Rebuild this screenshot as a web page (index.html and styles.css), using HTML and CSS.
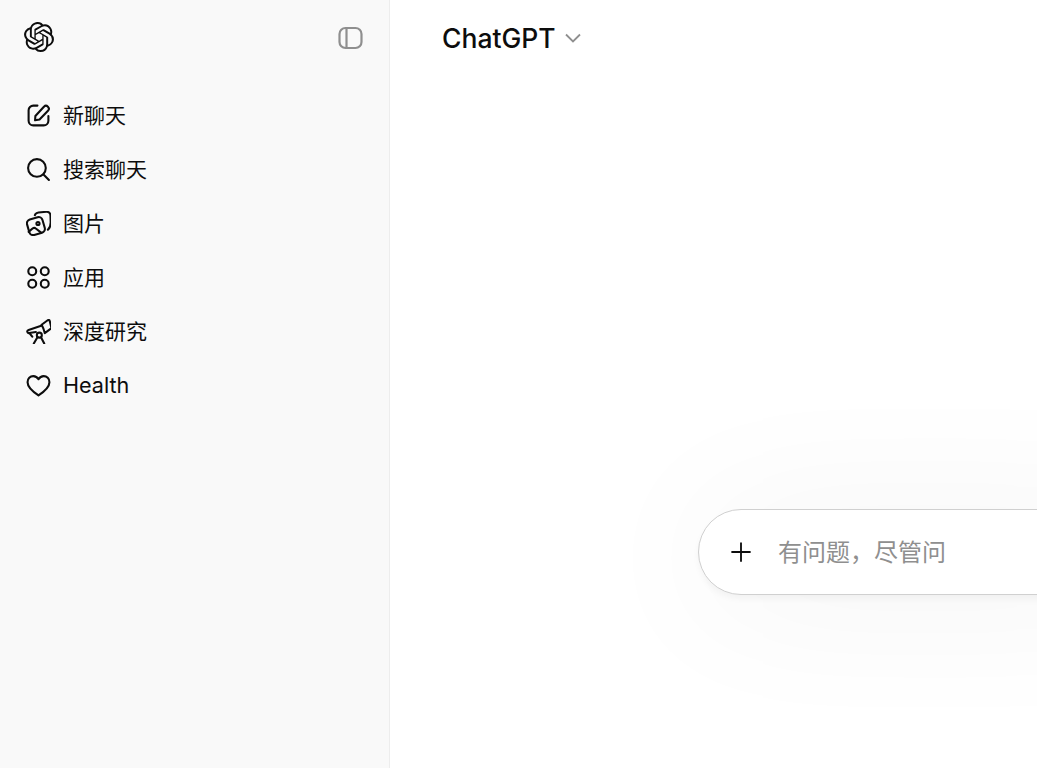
FILE: index.html
```html
<!DOCTYPE html>
<html lang="zh-CN">
<head>
    <meta charset="UTF-8">
    <meta name="viewport" content="width=device-width, initial-scale=1.0">
    <title>ChatGPT</title>
    <link rel="stylesheet" href="styles.css">
</head>
<body>

    <aside class="sidebar">
        <div class="sidebar-top">
            <svg class="logo" viewBox="0 0 24 24" fill="#0d0d0d">
                <path d="M22.2819 9.8211a5.9847 5.9847 0 0 0-.5157-4.9108 6.0462 6.0462 0 0 0-6.5098-2.9A6.0651 6.0651 0 0 0 4.9807 4.1818a5.9847 5.9847 0 0 0-3.9977 2.9 6.0462 6.0462 0 0 0 .7427 7.0966 5.98 5.98 0 0 0 .511 4.9107 6.051 6.051 0 0 0 6.5146 2.9001A5.9847 5.9847 0 0 0 13.2599 24a6.0557 6.0557 0 0 0 5.7718-4.2058 5.9894 5.9894 0 0 0 3.9977-2.9001 6.0557 6.0557 0 0 0-.7475-7.0729zm-9.022 12.6081a4.4755 4.4755 0 0 1-2.8764-1.0408l.1419-.0804 4.7783-2.7582a.7948.7948 0 0 0 .3927-.6813v-6.7369l2.02 1.1686a.071.071 0 0 1 .038.052v5.5826a4.504 4.504 0 0 1-4.4945 4.4944zm-9.6607-4.1254a4.4708 4.4708 0 0 1-.5346-3.0137l.142.0852 4.783 2.7582a.7712.7712 0 0 0 .7806 0l5.8428-3.3685v2.3324a.0804.0804 0 0 1-.0332.0615L9.74 19.9502a4.4992 4.4992 0 0 1-6.1408-1.6464zM2.3408 7.8956a4.485 4.485 0 0 1 2.3655-1.9728V11.6a.7664.7664 0 0 0 .3879.6765l5.8144 3.3543-2.0201 1.1685a.0757.0757 0 0 1-.071 0l-4.8303-2.7865A4.504 4.504 0 0 1 2.3408 7.872zm16.5963 3.8558L13.1038 8.364 15.1192 7.2a.0757.0757 0 0 1 .071 0l4.8303 2.7913a4.4944 4.4944 0 0 1-.6765 8.1042v-5.6772a.79.79 0 0 0-.407-.667zm2.0107-3.0231l-.142-.0852-4.7735-2.7818a.7759.7759 0 0 0-.7854 0L9.409 9.2297V6.8974a.0662.0662 0 0 1 .0284-.0615l4.8303-2.7866a4.4992 4.4992 0 0 1 6.6802 4.66zM8.3065 12.863l-2.02-1.1638a.0804.0804 0 0 1-.038-.0567V6.0742a4.4992 4.4992 0 0 1 7.3757-3.4537l-.142.0805L8.704 5.459a.7948.7948 0 0 0-.3927.6813zm1.0976-2.3654l2.602-1.4998 2.6069 1.4998v2.9994l-2.5974 1.4997-2.6067-1.4997Z"/>
            </svg>
            <svg class="panel-icon" viewBox="0 0 26 24" fill="none" stroke="#8f8f8f" stroke-width="2.200">
                <rect x="2" y="2" width="22" height="20" rx="6"/>
                <path d="M9 2.500v19"/>
            </svg>
        </div>

        <nav class="nav">
            <a href="#" class="nav-item">
                <svg class="nav-icon" viewBox="0 0 24 24">
                    <path d="M11 2.500H7A4.500 4.500 0 0 0 2.500 7v10A4.500 4.500 0 0 0 7 21.500h10a4.500 4.500 0 0 0 4.500-4.500v-4.500"/>
                    <path d="M9 12.500 17.200 3.600a2.700 2.700 0 0 1 3.900 3.800L13 15.800l-4.300.8z"/>
                </svg>
                <span class="nav-label">新聊天</span>
            </a>
            <a href="#" class="nav-item">
                <svg class="nav-icon" viewBox="0 0 24 24">
                    <circle cx="10.500" cy="10.500" r="8.500"/>
                    <path d="m16.800 16.800 5.200 5.200"/>
                </svg>
                <span class="nav-label">搜索聊天</span>
            </a>
            <a href="#" class="nav-item">
                <svg class="nav-icon" viewBox="0 0 24 24">
                    <path d="M8.500 4 9 3Q10 1.600 12 1.400L19.500.8Q23.300.7 23.500 4.500L23.700 11Q23.700 15.500 21 18"/>
                    <rect x="1.800" y="6.800" width="15.400" height="15.400" rx="3.800" transform="rotate(-16 9.500 14.500)"/>
                    <circle cx="11.500" cy="12" r="1.500"/>
                    <path d="m2.500 20 3.800-3.200c1-.8 2.200-.8 3.100 0l5.100 4"/>
                </svg>
                <span class="nav-label">图片</span>
            </a>
            <a href="#" class="nav-item">
                <svg class="nav-icon" viewBox="0 0 24 24">
                    <circle cx="6" cy="6" r="3.800"/>
                    <circle cx="18" cy="6" r="3.800"/>
                    <circle cx="6" cy="18" r="3.800"/>
                    <circle cx="18" cy="18" r="3.800"/>
                </svg>
                <span class="nav-label">应用</span>
            </a>
            <a href="#" class="nav-item">
                <svg class="nav-icon" viewBox="0 0 24 24">
                    <path d="M15 5.500 20.800 1.200Q22.300.4 22.800 2L24.200 7.800Q24.400 9 23.200 9.800L18 13.500Q17 9 15 5.500z"/>
                    <path d="M15.300 6.200 2.500 10.500Q1 11 1.200 12.300 1.600 13.800 3 13.500L9.500 12.500"/>
                    <circle cx="12.800" cy="15.500" r="2.400"/>
                    <path d="M11 17.500 7.500 23.500M14.500 17.800 17.500 23.500M3.500 13.700 6 17"/>
                </svg>
                <span class="nav-label">深度研究</span>
            </a>
            <a href="#" class="nav-item">
                <svg class="nav-icon" viewBox="0 0 24 24">
                    <path d="M12 21.500C6.500 17.800 1.500 14 1.500 8.800 1.500 5.400 4 3 7 3c2 0 3.800 1 5 3 1.200-2 3-3 5-3 3 0 5.500 2.400 5.500 5.800 0 5.200-5 9-10.500 12.700z"/>
                </svg>
                <span class="nav-label latin">Health</span>
            </a>
        </nav>
    </aside>

    <main class="main">
        <header class="topbar">
            <span class="model-name">ChatGPT</span>
            <svg class="chevron" viewBox="0 0 18 12" fill="none" stroke="#8f8f8f" stroke-width="1.800">
                <path d="m2 2.500 7 7 7-7"/>
            </svg>
        </header>

        <div class="composer-wrap">
            <div class="composer">
                <svg class="plus" viewBox="0 0 24 24" fill="none" stroke="#0d0d0d" stroke-width="2">
                    <path d="M12 1.500v21M1.500 12h21"/>
                </svg>
                <span class="placeholder">有问题，尽管问</span>
            </div>
        </div>
    </main>

</body>
</html>
```

FILE: styles.css
```css
* {
    margin: 0;
    padding: 0;
    box-sizing: border-box;
}

html, body {
    height: 100%;
}

body {
    font-family: 'Inter', 'Noto Sans CJK SC', sans-serif;
    display: flex;
    overflow: hidden;
    background-color: #fff;
    color: #0d0d0d;
}

.sidebar {
    width: 390px;
    flex-shrink: 0;
    background-color: #f9f9f9;
    border-right: 1px solid #ededed;
}

.sidebar-top {
    height: 75px;
    padding: 0 25px 0 24px;
    display: flex;
    justify-content: space-between;
    align-items: center;
}

.logo {
    width: 30px;
    height: 30px;
    margin-top: -1px;
}

.panel-icon {
    width: 27px;
    height: 24px;
}

.nav {
    margin-top: 13px;
    display: flex;
    flex-direction: column;
}

.nav-item {
    height: 54px;
    padding-left: 26px;
    display: flex;
    align-items: center;
    gap: 12px;
    color: #0d0d0d;
    text-decoration: none;
    font-size: 21px;
}

.nav-label {
    margin-bottom: 2px;
}

.nav-label.latin {
    margin-bottom: 0;
    font-size: 21.600px;
}

.nav-icon {
    width: 25px;
    height: 25px;
    fill: none;
    stroke: #0d0d0d;
    stroke-width: 2;
    stroke-linecap: round;
    stroke-linejoin: round;
}

.main {
    flex: 1;
    min-width: 0;
}

.topbar {
    height: 75px;
    padding-left: 52px;
    display: flex;
    align-items: center;
    gap: 8px;
}

.model-name {
    font-size: 26.500px;
    font-weight: 500;
}

.chevron {
    width: 18px;
    height: 12px;
}

.composer-wrap {
    padding: 434px 0 0 308px;
}

.composer {
    width: 720px;
    height: 86px;
    padding-left: 31px;
    display: flex;
    align-items: center;
    gap: 26px;
    background-color: #fff;
    border: 1px solid #d0d0d0;
    border-radius: 43px;
    box-shadow: 0 4px 6px rgba(0, 0, 0, 0.04), 0 6px 150px rgba(0, 0, 0, 0.055);
}

.plus {
    width: 22px;
    height: 22px;
    flex-shrink: 0;
}

.placeholder {
    margin-bottom: 4px;
    font-size: 24px;
    color: #8f8f8f;
}
```
